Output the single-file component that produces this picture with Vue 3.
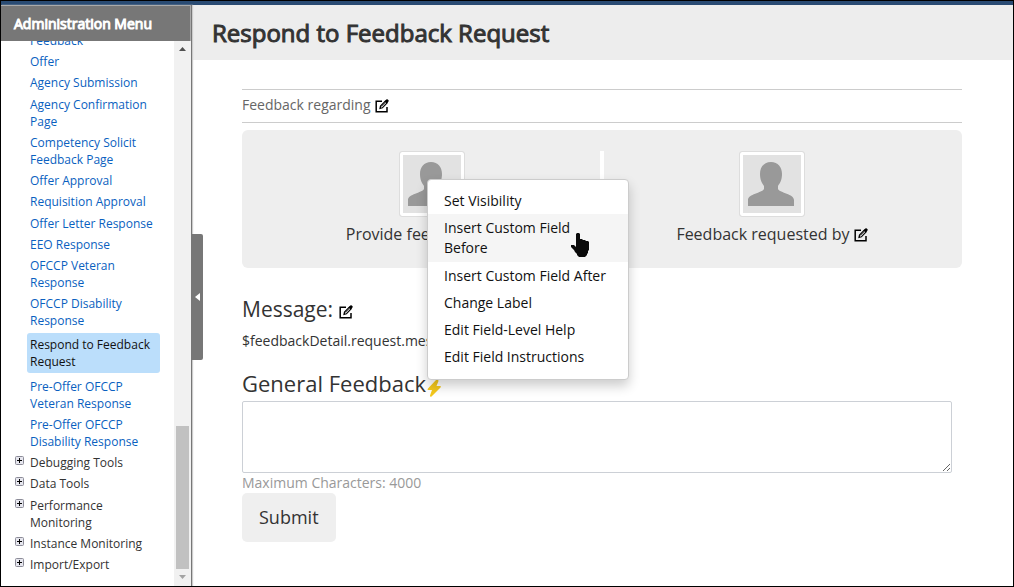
<script setup>
import { ref } from 'vue'

const feedback = ref('')

const pages = [
  { label: 'Feedback' },
  { label: 'Offer' },
  { label: 'Agency Submission' },
  { label: 'Agency Confirmation Page' },
  { label: 'Competency Solicit Feedback Page' },
  { label: 'Offer Approval' },
  { label: 'Requisition Approval' },
  { label: 'Offer Letter Response' },
  { label: 'EEO Response' },
  { label: 'OFCCP Veteran Response' },
  { label: 'OFCCP Disability Response' },
  { label: 'Respond to Feedback Request', current: true },
  { label: 'Pre-Offer OFCCP Veteran Response' },
  { label: 'Pre-Offer OFCCP Disability Response' },
  { label: 'Debugging Tools', group: true },
  { label: 'Data Tools', group: true },
  { label: 'Performance Monitoring', group: true },
  { label: 'Instance Monitoring', group: true },
  { label: 'Import/Export', group: true },
]

const menuItems = [
  'Set Visibility',
  'Insert Custom Field Before',
  'Insert Custom Field After',
  'Change Label',
  'Edit Field-Level Help',
  'Edit Field Instructions',
]
const hovered = 1
</script>

<template>
  <div class="page">
    <svg class="defs" width="0" height="0" aria-hidden="true">
      <symbol id="edit" viewBox="0 0 14 14">
        <path d="M7 2.200H1.200V12.800H12V8" fill="none" stroke="#000" stroke-width="1.500" />
        <path d="M5 9.400 5.500 7 10.400 2 12.200 3.800 7.400 8.800Z" fill="#fff" stroke="#000" stroke-width="1.200" />
        <path d="M9.400 2.400 11.300.6Q12 0 12.800.6L13.500 1.300Q14 1.900 13.500 2.500L11.500 4.600Z" fill="#000" />
        <path d="M6.600 7.600 10.400 3.800" stroke="#000" stroke-width=".7" />
      </symbol>
      <symbol id="person" viewBox="0 0 60 60">
        <path d="M29 8C36 8 40 13 40 20C40 26 38 29 36 32V35C38 39 52 40 52 46V52H6V46C6 40 20 39 22 35V32C20 29 18 26 18 20C18 13 22 8 29 8Z" fill="#999" />
      </symbol>
    </svg>
    <div class="topbar"></div>
    <div class="body">
      <nav class="sidebar" aria-label="Administration Menu">
        <h2 class="side-title">Administration Menu</h2>
        <div class="side-body">
          <ul class="tree">
            <li v-for="p in pages" :key="p.label">
              <button v-if="p.group" class="expand" :aria-label="'Expand ' + p.label">
                <svg width="9" height="9" viewBox="0 0 9 9">
                  <rect x=".5" y=".5" width="8" height="8" rx="1" fill="#e6e6ee" stroke="#8c8c98" />
                  <path d="M2 4.500H7M4.500 2V7" stroke="#000" />
                </svg>
              </button>
              <a href="#" :class="{ current: p.current, group: p.group }">{{ p.label }}</a>
            </li>
          </ul>
          <div class="scrollbar" aria-hidden="true">
            <svg width="7" height="4" viewBox="0 0 7 4"><path d="M0 4 3.500 0 7 4Z" fill="#505050" /></svg>
            <div class="track"><div class="thumb"></div></div>
            <svg width="7" height="4" viewBox="0 0 7 4"><path d="M0 0 3.500 4 7 0Z" fill="#a3a3a3" /></svg>
          </div>
        </div>
        <button class="collapse" aria-label="Collapse menu">
          <svg width="5" height="8" viewBox="0 0 5 8"><path d="M5 0V8L0 4Z" fill="#fff" /></svg>
        </button>
      </nav>

      <main class="main">
        <header class="head"><h1>Respond to Feedback Request</h1></header>
        <div class="content">
          <div class="regarding">
            Feedback regarding
            <svg class="edit"><use href="#edit" /></svg>
          </div>
          <section class="people">
            <div class="person">
              <svg class="avatar"><use href="#person" /></svg>
              <p>Provide feedback for <svg class="edit"><use href="#edit" /></svg></p>
            </div>
            <div class="person">
              <svg class="avatar"><use href="#person" /></svg>
              <p>Feedback requested by <svg class="edit"><use href="#edit" /></svg></p>
            </div>
            <div class="menu">
              <ul>
                <li v-for="(m, i) in menuItems" :key="m">
                  <button :class="{ hover: i === hovered }">{{ m }}</button>
                </li>
              </ul>
              <svg class="pointer" width="18" height="24" viewBox="0 0 18 24" aria-hidden="true">
                <path d="M5 1 6 0H8L9 1V6H11L12 7H14L15 8H17L18 9V17L17 18V20L16 21V22L14 24H8L6 22V21L4 19L3 17L0 14V12H3L5 14Z" fill="#0a0a0a" />
              </svg>
            </div>
          </section>
          <h3>Message: <svg class="edit"><use href="#edit" /></svg></h3>
          <p class="message">$feedbackDetail.request.message</p>
          <label class="general" for="general">General Feedback<svg class="bolt" width="15" height="18" viewBox="0 0 15 18">
            <path d="M9 1 1 9.500Q0 11 1.500 11H5L3 16.500Q3 18.500 4.500 17.500L13.500 8.500Q14.500 7 13 7H9.500L11.500 2Q11.500 0 9 1Z" fill="#f4c81c" />
          </svg></label>
          <textarea id="general" v-model="feedback"></textarea>
          <p class="hint">Maximum Characters: 4000</p>
          <button class="submit">Submit</button>
        </div>
      </main>
    </div>
  </div>
</template>

<style>
body {
  margin: 0;
}
</style>

<style scoped>
.page {
  box-sizing: border-box;
  height: 100vh;
  display: flex;
  flex-direction: column;
  border: 1px solid #000;
  background: #fff;
  color: #333;
  font-family: "Open Sans", "Noto Sans", sans-serif;
  font-size: 14px;
  line-height: 20px;
  overflow: hidden;
}
.defs {
  position: absolute;
}
.topbar {
  height: 4px;
  background: #294b73;
  flex: none;
}
.body {
  flex: 1;
  min-height: 0;
  display: flex;
}
h1, h2, h3, p, ul {
  margin: 0;
  padding: 0;
}
button {
  font: inherit;
  color: inherit;
  border: 0;
  padding: 0;
  background: none;
}
.sidebar {
  position: relative;
  width: 190px;
  flex: none;
  display: flex;
  flex-direction: column;
  border-right: 1px solid #777;
  box-shadow: 1px 0 1px #ccc;
  z-index: 1;
}
.side-title {
  padding: 7px 13px;
  background: #777;
  border-top: 1px solid #aaa;
  border-right: 1px solid #aaa;
  color: #fff;
  font-size: 14px;
  line-height: 21px;
  font-weight: 500;
  -webkit-text-stroke: 1px #fff;
  paint-order: stroke fill;
}
.side-body {
  flex: 1;
  min-height: 0;
  display: flex;
  overflow: hidden;
}
.tree {
  flex: 1;
  list-style: none;
  display: flex;
  flex-direction: column;
  justify-content: space-between;
  margin-top: -9px;
  padding: 0 14px 13px 26px;
  font-size: 12px;
  line-height: 17px;
}
.tree li {
  position: relative;
}
.tree a {
  display: block;
  padding: 0 3px;
  color: #0a5fc0;
  text-decoration: none;
}
.tree a.group {
  color: #333;
}
.tree a.current {
  padding: 3px;
  border-radius: 3px;
  background: #bbdefb;
  color: #111;
}
.expand {
  position: absolute;
  left: -12px;
  top: 2px;
  display: flex;
}
.scrollbar {
  width: 17px;
  box-sizing: border-box;
  padding: 6px 2px 7px;
  background: #f1f1f1;
  display: flex;
  flex-direction: column;
  align-items: center;
}
.track {
  flex: 1;
  align-self: stretch;
  display: flex;
  flex-direction: column;
  justify-content: flex-end;
  padding: 6px 0;
}
.thumb {
  height: 28%;
  background: #c1c1c1;
}
.collapse {
  position: absolute;
  left: 100%;
  top: 229px;
  width: 12px;
  height: 126px;
  display: flex;
  align-items: center;
  justify-content: center;
  border-radius: 0 2px 2px 0;
  background: #777;
}
.main {
  flex: 1;
  min-width: 0;
}
.head {
  padding: 13px 20px 12px;
  background: #ededed;
}
h1 {
  font-size: 24px;
  line-height: 30px;
  font-weight: 500;
  -webkit-text-stroke: 1px #333;
  paint-order: stroke fill;
}
.content {
  padding: 29px 51px 0 50px;
}
.edit {
  width: 14px;
  height: 14px;
  vertical-align: -2px;
}
.regarding {
  padding: 5px 0 7px;
  border-top: 1px solid #ccc;
  border-bottom: 1px solid #ccc;
  color: #666;
}
.regarding .edit {
  margin-left: 1px;
  vertical-align: -3px;
}
.people {
  position: relative;
  margin-top: 7px;
  padding: 21px 20px;
  display: grid;
  grid-template-columns: 1fr 1fr;
  background: #eee;
  border-radius: 6px;
}
.people::before {
  content: "";
  position: absolute;
  left: calc(50% - 2px);
  top: 21px;
  bottom: 21px;
  width: 4px;
  background: #fff;
}
.person {
  display: flex;
  flex-direction: column;
  align-items: center;
  font-size: 16px;
  line-height: 24px;
}
.person p {
  margin: 5px 0 1px;
}
.avatar {
  width: 60px;
  height: 60px;
  background: #e2e2e2;
  border: 1px solid #ddd;
  border-radius: 3px;
  padding: 2px;
  box-shadow: inset 0 0 0 3px #fff;
}
.menu {
  position: absolute;
  left: 185px;
  top: 49px;
  width: 200px;
  padding: 7px 0 9px;
  background: #fff;
  border: 1px solid #ccc;
  border-radius: 4px;
  box-shadow: 0 6px 12px rgba(0, 0, 0, 0.2);
}
.menu ul {
  list-style: none;
}
.menu button {
  width: 100%;
  display: block;
  padding: 4px 16px 3px;
  color: #111;
  text-align: left;
}
.menu button.hover {
  padding-bottom: 4px;
  background: #f5f5f5;
}
.pointer {
  position: absolute;
  left: 143px;
  top: 53px;
}
h3, .general {
  display: block;
  line-height: 30px;
  font-weight: 400;
}
h3 {
  margin-top: 26px;
  font-size: 21px;
}
.message {
  margin-top: 7px;
}
.general {
  margin-top: 17px;
  font-size: 22px;
}
.bolt {
  margin-left: 1px;
  vertical-align: -5px;
}
textarea {
  display: block;
  box-sizing: border-box;
  width: calc(100% - 10px);
  height: 72px;
  margin-top: 3px;
  border: 1px solid #ccd0d6;
  border-radius: 2px;
  background: #fff;
  font: inherit;
}
.hint {
  color: #999;
}
.submit {
  padding: 12px 17px 13px;
  border-radius: 5px;
  background: #efefef;
  font-size: 18px;
  line-height: 24px;
}
</style>
